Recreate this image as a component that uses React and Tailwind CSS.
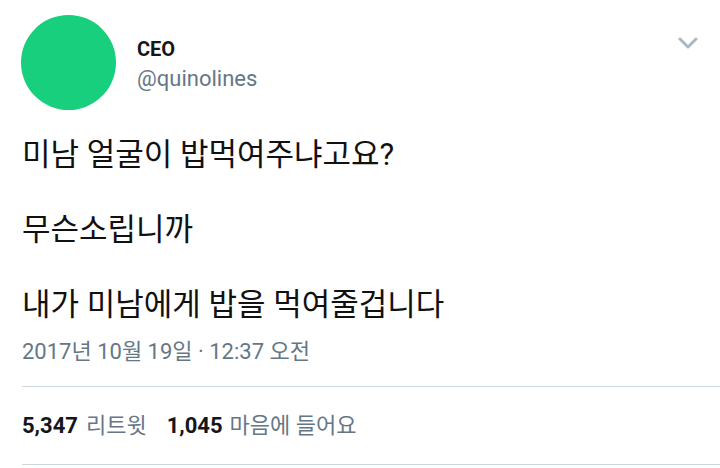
const Chevron = () => (
  <svg width="20" height="12" viewBox="0 0 20 12" fill="none">
    <path d="M2 2l8 8 8-8" stroke="#aab8c2" strokeWidth="3" strokeLinecap="round" strokeLinejoin="round" />
  </svg>
);

const App = () => {
  return (
    <div className="w-[720px] h-[468px] bg-white overflow-hidden font-['Roboto','Noto_Sans_CJK_KR',sans-serif] text-[#14171a]">
      {/* header */}
      <div className="flex pl-[21px] pt-[15px] pr-[22px]">
        <div className="w-[95px] h-[95px] rounded-full bg-[#17cf7c] shrink-0" />
        <div className="ml-[21px] pt-[20px] flex-1">
          <div className="text-[20px] font-bold leading-[28px]">CEO</div>
          <div className="text-[22px] leading-[28px] text-[#657786] mt-[2px]">@quinolines</div>
        </div>
        <div className="pt-[22px]">
          <Chevron />
        </div>
      </div>

      {/* tweet body */}
      <div className="pl-[22px] mt-[26px] text-[31px] leading-[37.5px] text-[#111]">
        <p>미남 얼굴이 밥먹여주냐고요?</p>
        <p className="mt-[37.5px]">무슨소립니까</p>
        <p className="mt-[37.5px]">내가 미남에게 밥을 먹여줄겁니다</p>
      </div>

      <div className="pl-[22px] mt-[14px] text-[22px] leading-[28px] text-[#657786]">
        2017년 10월 19일 · 12:37 오전
      </div>

      <div className="ml-[22px] mt-[20px] border-t border-[#ccd6dd]" />

      <div className="pl-[22px] flex items-center h-[77px] text-[22px]">
        <span className="font-bold">5,347</span>
        <span className="ml-[8px] text-[#657786]">리트윗</span>
        <span className="ml-[20px] font-bold">1,045</span>
        <span className="ml-[7px] text-[#657786]">마음에 들어요</span>
      </div>

      <div className="ml-[22px] border-t border-[#ccd6dd]" />
    </div>
  );
};

export default App;
